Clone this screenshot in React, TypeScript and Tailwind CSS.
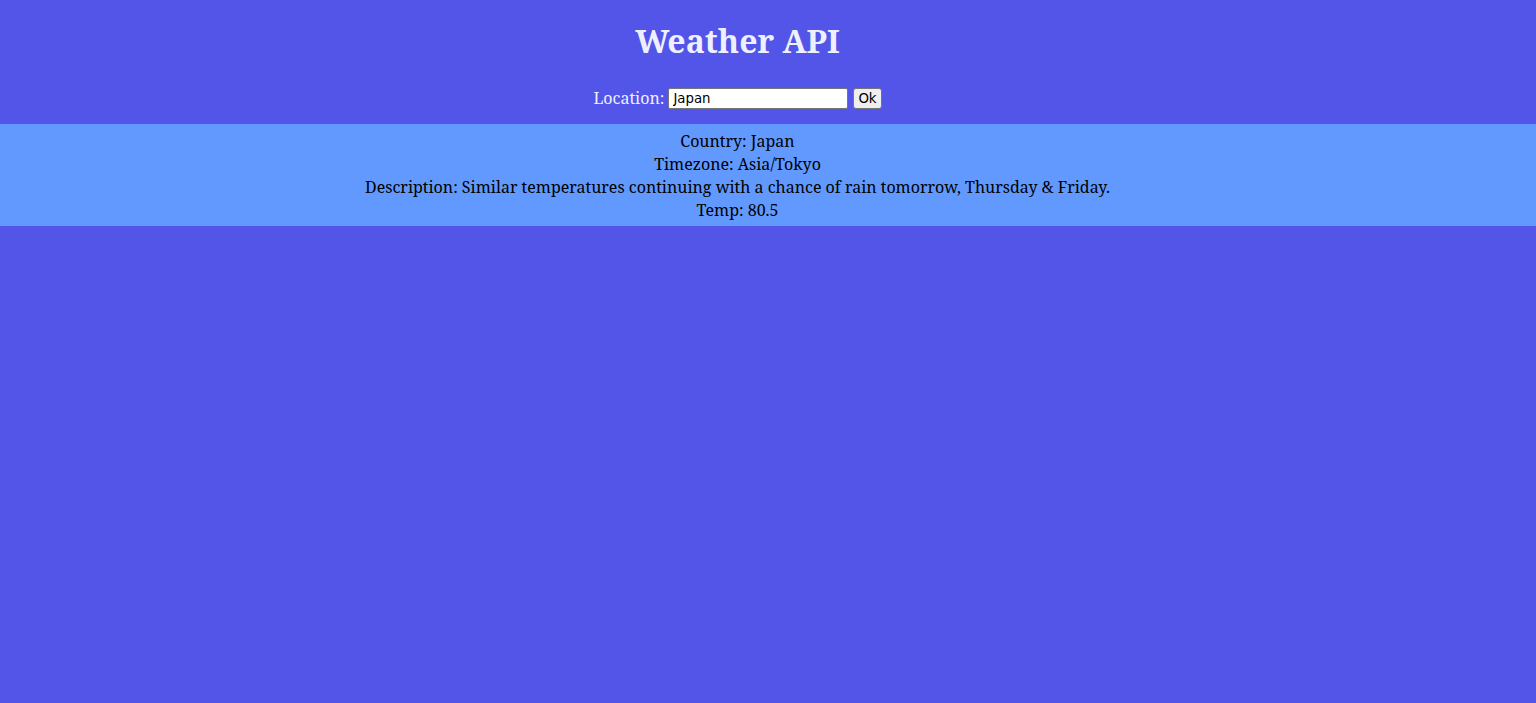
import { useState } from "react";

export default function App() {
  const [location, setLocation] = useState("Japan");

  return (
    <div className="min-h-screen bg-[#5355e8] font-['Noto_Serif','DejaVu_Serif',serif] text-base">
      <h1 className="pt-[19px] pr-[61px] pb-[19px] text-center text-[32px] font-bold leading-[43px] text-[#eef0ff]">
        Weather API
      </h1>
      <form
        className="flex items-center justify-center pt-[5px] pr-[61px] pb-[14px]"
        onSubmit={(e) => e.preventDefault()}
      >
        <label className="mr-[4px] text-[#eef0ff]">Location:</label>
        <input
          value={location}
          onChange={(e) => setLocation(e.target.value)}
          className="h-[21px] w-[180px] rounded-[2px] border border-[#767676] bg-white px-[4px] font-['DejaVu_Sans',sans-serif] text-[13.33px] text-black"
        />
        <button
          type="submit"
          className="ml-[5px] h-[21px] rounded-[3px] border border-[#767676] bg-[#efefef] px-[4px] font-['DejaVu_Sans',sans-serif] text-[13.33px] text-black"
        >
          Ok
        </button>
      </form>
      <div className="bg-[#6199ff] pt-[6px] pr-[61px] pb-[4px] text-center leading-[23px] text-black">
        <div>Country: Japan</div>
        <div>Timezone: Asia/Tokyo</div>
        <div>Description: Similar temperatures continuing with a chance of rain tomorrow, Thursday &amp; Friday.</div>
        <div>Temp: 80.5</div>
      </div>
    </div>
  );
}
